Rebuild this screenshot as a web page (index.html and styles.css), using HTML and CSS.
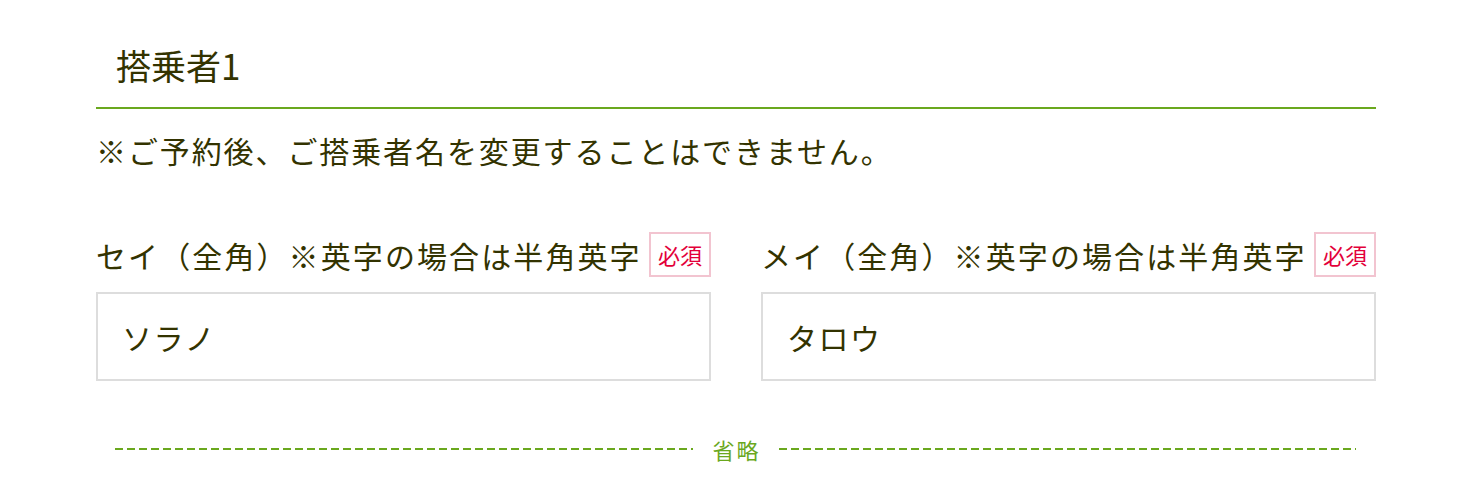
FILE: index.html
```html
<!DOCTYPE html>
<html lang="ja">
<head>
<meta charset="utf-8">
<title>搭乗者1</title>
<link rel="stylesheet" href="styles.css">
</head>
<body>
<main class="page">
  <section class="passenger">
    <h2 class="passenger-title">搭乗者1</h2>
    <p class="note">※ご予約後、ご搭乗者名を変更することはできません。</p>
    <div class="fields">
      <div class="field">
        <div class="field-label">
          <label class="label-text" for="sei">セイ（全角）※英字の場合は半角英字</label>
          <span class="required">必須</span>
        </div>
        <input class="text-input" id="sei" type="text" value="ソラノ">
      </div>
      <div class="field">
        <div class="field-label">
          <label class="label-text" for="mei">メイ（全角）※英字の場合は半角英字</label>
          <span class="required">必須</span>
        </div>
        <input class="text-input" id="mei" type="text" value="タロウ">
      </div>
    </div>
    <div class="omitted">
      <span class="omitted-line"></span>
      <span class="omitted-text">省略</span>
      <span class="omitted-line"></span>
    </div>
  </section>
</main>
</body>
</html>
```

FILE: styles.css
```css
html, body {
  margin: 0;
  padding: 0;
  background: #ffffff;
}

body {
  font-family: "Noto Sans CJK JP", "Noto Sans", sans-serif;
  color: #333300;
}

.page {
  width: 1280px;
  margin: 0 0 0 96px;
}

.passenger-title {
  margin: 0;
  padding: 40px 0 17px 20px;
  font-size: 35px;
  line-height: 50px;
  font-weight: 400;
  border-bottom: 2px solid #6aa81e;
}

.note {
  margin: 19px 0 0;
  font-size: 30px;
  line-height: 44px;
  letter-spacing: 1.9px;
}

.fields {
  display: flex;
  gap: 50px;
  margin-top: 60px;
}

.field {
  flex: 1;
  display: flex;
  flex-direction: column;
}

.field-label {
  display: flex;
  align-items: center;
  justify-content: space-between;
  height: 45px;
}

.label-text {
  font-size: 30px;
  line-height: 44px;
  letter-spacing: 2.1px;
}

.required {
  box-sizing: border-box;
  height: 45px;
  padding: 0 7px;
  border: 2px solid #f2c4d0;
  color: #e3003a;
  font-size: 22px;
  line-height: 41px;
}

.text-input {
  box-sizing: border-box;
  margin-top: 15px;
  width: 100%;
  height: 89px;
  padding: 0 24px;
  border: 2px solid #dddddd;
  border-radius: 0;
  background: #ffffff;
  color: #333300;
  font-family: "Noto Sans CJK JP", "Noto Sans", sans-serif;
  font-size: 30px;
  letter-spacing: 1.5px;
  outline: none;
}

.omitted {
  display: flex;
  align-items: center;
  margin: 53px 20px 0 19px;
  height: 30px;
}

.omitted-line {
  flex: 1;
  height: 2px;
  background: repeating-linear-gradient(to right, #6aa81e 0 8px, transparent 8px 12px);
}

.omitted-text {
  padding: 0 18px 0 20px;
  color: #6aa81e;
  font-size: 22px;
  line-height: 30px;
  letter-spacing: 2px;
}
```
